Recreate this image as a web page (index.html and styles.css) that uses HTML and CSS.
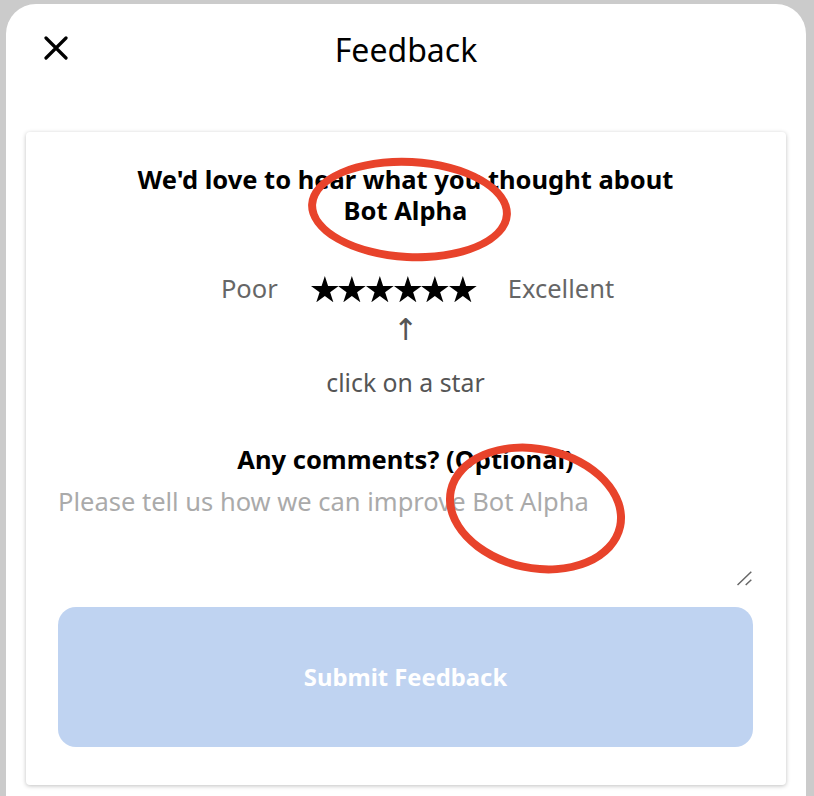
FILE: index.html
```html
<!DOCTYPE html>
<html>
<head>
<meta charset="utf-8">
<link rel="stylesheet" href="styles.css">
</head>
<body>
<div class="panel">
  <header class="header">
    <button class="close" aria-label="Close">
      <svg width="24" height="24" viewBox="0 0 24 24"><path d="M2 2 L22 22 M22 2 L2 22" stroke="#000" stroke-width="3.2" stroke-linecap="round" fill="none"/></svg>
    </button>
    <h1 class="title">Feedback</h1>
  </header>
  <section class="card">
    <h2 class="heading">We'd love to hear what you thought about<br>Bot Alpha</h2>
    <div class="rating">
      <span class="label">Poor</span>
      <span class="stars">
        <svg class="star" viewBox="0 0 27.7 26.3"><polygon points="13.85,0 17.11,10.02 27.7,10.02 19.13,16.21 22.41,26.3 13.85,20.1 5.29,26.3 8.57,16.21 0,10.02 10.59,10.02"/></svg>
        <svg class="star" viewBox="0 0 27.7 26.3"><polygon points="13.85,0 17.11,10.02 27.7,10.02 19.13,16.21 22.41,26.3 13.85,20.1 5.29,26.3 8.57,16.21 0,10.02 10.59,10.02"/></svg>
        <svg class="star" viewBox="0 0 27.7 26.3"><polygon points="13.85,0 17.11,10.02 27.7,10.02 19.13,16.21 22.41,26.3 13.85,20.1 5.29,26.3 8.57,16.21 0,10.02 10.59,10.02"/></svg>
        <svg class="star" viewBox="0 0 27.7 26.3"><polygon points="13.85,0 17.11,10.02 27.7,10.02 19.13,16.21 22.41,26.3 13.85,20.1 5.29,26.3 8.57,16.21 0,10.02 10.59,10.02"/></svg>
        <svg class="star" viewBox="0 0 27.7 26.3"><polygon points="13.85,0 17.11,10.02 27.7,10.02 19.13,16.21 22.41,26.3 13.85,20.1 5.29,26.3 8.57,16.21 0,10.02 10.59,10.02"/></svg>
        <svg class="star" viewBox="0 0 27.7 26.3"><polygon points="13.85,0 17.11,10.02 27.7,10.02 19.13,16.21 22.41,26.3 13.85,20.1 5.29,26.3 8.57,16.21 0,10.02 10.59,10.02"/></svg>
      </span>
      <span class="label">Excellent</span>
    </div>
    <div class="arrow">↑</div>
    <div class="hint">click on a star</div>
    <h3 class="comments">Any comments? (Optional)</h3>
    <div class="field">
      <textarea class="input" placeholder="Please tell us how we can improve Bot Alpha"></textarea>
      <svg class="grip" width="16" height="16" viewBox="0 0 16 16"><path d="M0.5 15 L14.3 1.7 M8.7 15 L14.3 9.7" stroke="#666" stroke-width="1.5" fill="none"/></svg>
    </div>
    <button class="submit">Submit Feedback</button>
  </section>
  <div class="mark mark-one"></div>
  <div class="mark mark-two"></div>
</div>
</body>
</html>
```
FILE: styles.css
```css
html, body {
  margin: 0;
  padding: 0;
}
body {
  background: #cbcbcb;
  font-family: "Noto Sans", "Open Sans", sans-serif;
  height: 796px;
  overflow: hidden;
}
.panel {
  position: relative;
  margin: 4px 8px 0 6px;
  height: 792px;
  background: #fff;
  border-radius: 30px 30px 0 0;
  padding: 0 20px;
  box-sizing: border-box;
}
.header {
  position: relative;
  height: 128px;
  display: flex;
  justify-content: center;
}
.close {
  position: absolute;
  left: 18px;
  top: 32px;
  border: 0;
  background: none;
  padding: 0;
  width: 24px;
  height: 24px;
}
.title {
  margin: 0;
  padding-top: 24px;
  font-size: 32px;
  font-weight: 400;
  line-height: 44px;
  color: #000;
}
.card {
  background: #fff;
  border-radius: 4px;
  box-shadow: 0 1px 4px rgba(0,0,0,0.25);
  padding: 32px 33px 38px 32px;
  display: flex;
  flex-direction: column;
  align-items: center;
}
.heading {
  margin: 0;
  font-size: 25.5px;
  font-weight: 700;
  line-height: 31px;
  text-align: center;
  color: #000;
}
.rating {
  display: flex;
  align-items: center;
  margin-top: 46px;
  margin-left: 24px;
  height: 34px;
}
.label {
  font-size: 25.5px;
  line-height: 34px;
  color: #666;
  margin-top: -3px;
}
.stars {
  display: flex;
  margin: 0 31px 0 33px;
}
.star {
  width: 27.7px;
  height: 26.3px;
  display: block;
  fill: #000;
}
.arrow {
  margin-top: 9px;
  font-family: "DejaVu Sans", sans-serif;
  font-size: 30px;
  line-height: 30px;
  color: #555;
}
.hint {
  margin-top: 20px;
  font-size: 24.8px;
  line-height: 34px;
  color: #555;
}
.comments {
  margin: 43px 0 0;
  font-size: 25.5px;
  font-weight: 700;
  line-height: 34px;
  color: #000;
}
.field {
  position: relative;
  align-self: stretch;
  margin-top: 8px;
  height: 102px;
}
.input {
  display: block;
  width: 100%;
  height: 100%;
  box-sizing: border-box;
  border: 0;
  outline: none;
  padding: 0;
  font-family: inherit;
  font-size: 25.5px;
  line-height: 34px;
  color: #333;
  resize: none;
}
.input::placeholder {
  color: #aaa;
}
.grip {
  position: absolute;
  right: 0;
  bottom: 0;
}
.submit {
  align-self: stretch;
  margin-top: 21px;
  height: 140px;
  border: 0;
  border-radius: 18px;
  background: #bfd3f1;
  color: #fff;
  font-family: inherit;
  font-size: 23.8px;
  font-weight: 700;
}
.mark {
  position: absolute;
  border: 8px solid #e8432b;
  border-radius: 50%;
  box-sizing: border-box;
  pointer-events: none;
}
.mark-one {
  left: 302px;
  top: 154px;
  width: 203px;
  height: 103px;
  transform: rotate(3deg);
}
.mark-two {
  left: 439px;
  top: 441px;
  width: 181px;
  height: 127px;
  transform: rotate(12deg);
}
```
